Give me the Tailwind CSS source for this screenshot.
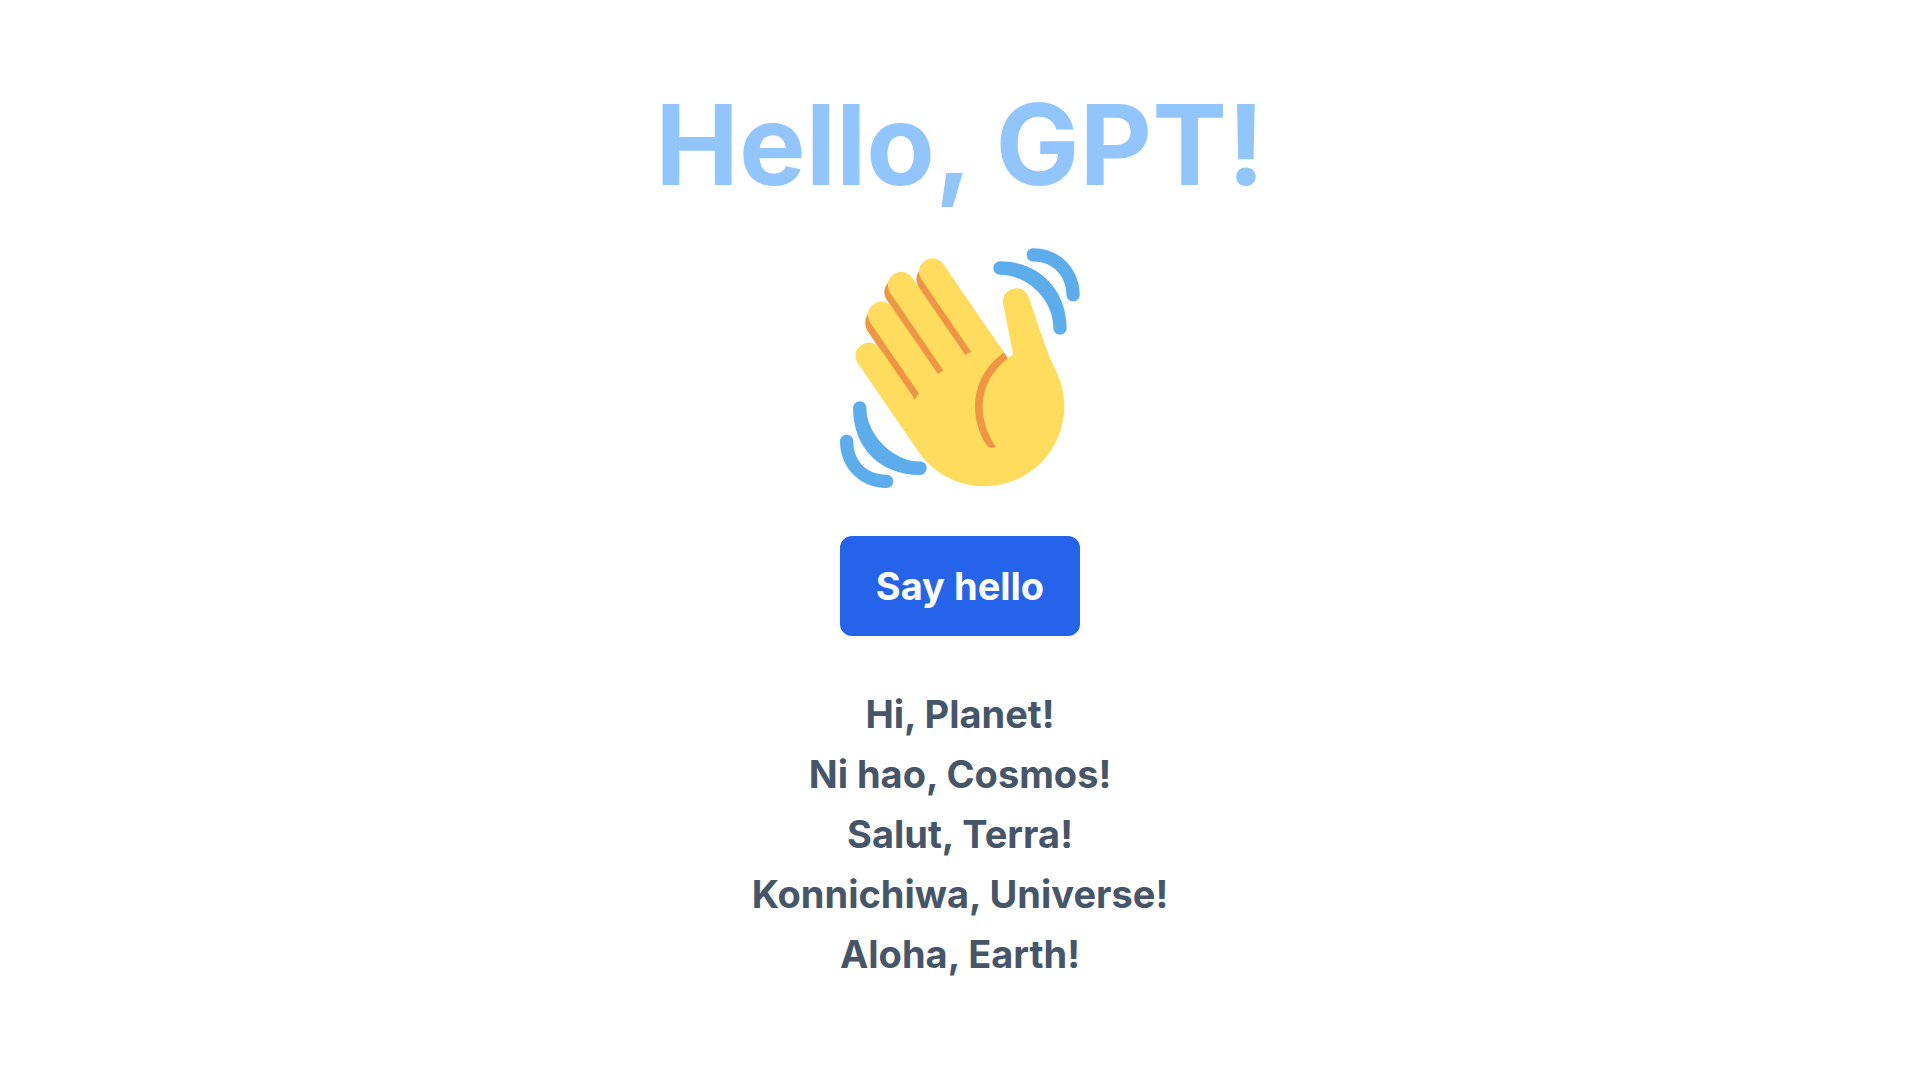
<!DOCTYPE html>
<html lang="en">
<head>
  <meta charset="UTF-8" />
  <meta name="viewport" content="width=device-width, initial-scale=1.0"/>
  <title>Hello, GPT!</title>
  <script src="https://cdn.jsdelivr.net/npm/@tailwindcss/browser@4"></script>
</head>
<body class="min-h-screen bg-white font-['Inter','Liberation_Sans',sans-serif]">

  <main class="flex flex-col items-center gap-12 pt-22 pb-20 text-center">
    <h1 class="text-[112px] leading-none font-bold text-[#93c5fd]">Hello, GPT!</h1>

    <!-- Waving hand -->
    <svg class="size-60" viewBox="0 0 36 36" role="img" aria-label="Waving hand">
      <path fill="#EF9645" d="M4.861 9.147c.94-.657 2.357-.531 3.201.166l-.968-1.407c-.779-1.111-.5-2.313.612-3.093 1.112-.777 4.263 1.312 4.263 1.312-.786-1.122-.639-2.544.483-3.331 1.122-.784 2.67-.513 3.456.611l10.42 14.72L25 31l-11.083-4.042L4.25 12.625c-.793-1.129-.519-2.686.611-3.478z"/>
      <path fill="#FFDC5D" d="M2.695 17.336s-1.132-1.65.519-2.781c1.649-1.131 2.78.518 2.78.518l5.251 7.658c.181-.302.379-.6.6-.894L4.557 11.21s-1.131-1.649.519-2.78c1.649-1.131 2.78.518 2.78.518l6.855 9.997c.255-.208.516-.417.785-.622L7.549 6.732s-1.131-1.649.519-2.78c1.649-1.131 2.78.518 2.78.518l7.947 11.589c.292-.179.581-.334.871-.498L12.238 4.729s-1.131-1.649.518-2.78c1.649-1.131 2.78.518 2.78.518l7.854 11.454 1.194 1.742c-4.948 3.394-5.419 9.779-2.592 13.902.565.825 1.39.26 1.39.26-3.393-4.949-2.357-10.51 2.592-13.903L24.515 8.62s-.545-1.924 1.378-2.47c1.924-.545 2.47 1.379 2.47 1.379l1.685 5.004c.668 1.984 1.379 3.961 2.32 5.831 2.657 5.28 1.07 11.842-3.94 15.279-5.465 3.747-12.936 2.354-16.684-3.11L2.695 17.336z"/>
      <path fill="#5DADEC" d="M12 32.042C8 32.042 3.958 28 3.958 24c0-.553-.405-1-.958-1s-1.042.447-1.042 1C1.958 30 6 34.042 12 34.042c.553 0 1-.489 1-1.042s-.447-.958-1-.958z"/>
      <path fill="#5DADEC" d="M7 34c-3 0-5-2-5-5 0-.553-.447-1-1-1s-1 .447-1 1c0 4 3 7 7 7 .553 0 1-.447 1-1s-.447-1-1-1zM24 2c-.552 0-1 .448-1 1s.448 1 1 1c4 0 8 3.589 8 8 0 .552.448 1 1 1s1-.448 1-1c0-5.514-4-10-10-10z"/>
      <path fill="#5DADEC" d="M29 .042c-.552 0-1 .406-1 .958s.448 1.042 1 1.042c3 0 4.958 2.225 4.958 4.958 0 .552.489 1 1.042 1s.958-.448.958-1C35.958 3.163 33 .042 29 .042z"/>
    </svg>

    <button type="button" class="rounded-xl bg-[#2563eb] px-9 py-5 text-[38px] leading-[60px] font-bold text-white hover:bg-[#1d4ed8]">Say hello</button>

    <!-- Greetings -->
    <ul class="text-[38px] leading-[60px] font-bold text-[#475569]">
      <li>Hi, Planet!</li>
      <li>Ni hao, Cosmos!</li>
      <li>Salut, Terra!</li>
      <li>Konnichiwa, Universe!</li>
      <li>Aloha, Earth!</li>
    </ul>
  </main>

</body>
</html>
